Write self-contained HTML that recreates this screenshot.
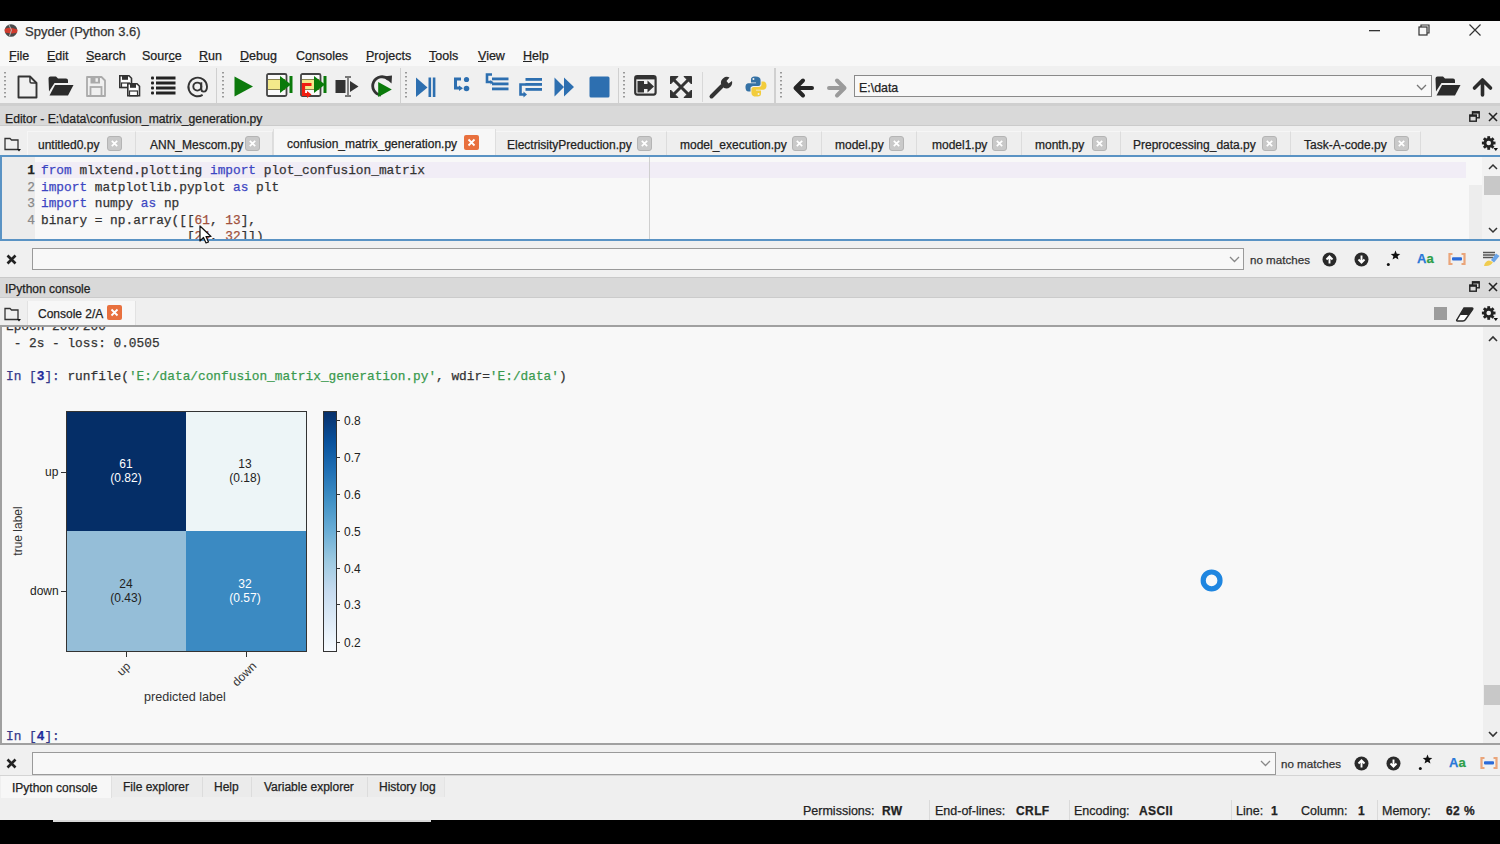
<!DOCTYPE html>
<html><head><meta charset="utf-8">
<style>
*{margin:0;padding:0;box-sizing:border-box}
html,body{width:1500px;height:844px;overflow:hidden;background:#000}
body{position:relative;font-family:"Liberation Sans",sans-serif;font-size:12px;color:#222}
.a{position:absolute}
.t{position:absolute;white-space:pre;line-height:1;-webkit-text-stroke:0.25px currentColor}
.mono{font-family:"Liberation Mono",monospace}
svg{position:absolute;overflow:visible}
</style></head><body>
<!-- window -->
<div class="a" style="left:0;top:21px;width:1500px;height:801px;background:#f0f0f0"></div>
<!-- title bar -->
<div class="a" style="left:0;top:21px;width:1500px;height:45px;background:#f8f8f8"></div>
<svg style="left:4px;top:24px" width="14" height="13" viewBox="0 0 14 13"><circle cx="7" cy="6.5" r="6.3" fill="#4a4a4a"/><path d="M0.6 5 Q5 3 8 4 Q11 4.5 13.4 5.5 L13.2 8.5 Q8 10 4 9 Q2 8.8 0.9 8.5 Z" fill="#d23c2e"/><path d="M5 1 L7.5 6 L5.5 12" stroke="#bbb" stroke-width="1" fill="none"/></svg>
<div class="t" style="left:25px;top:25px;font-size:13px;color:#333">Spyder (Python 3.6)</div>
<svg style="left:1369px;top:30px" width="12" height="2"><rect width="11" height="1.3" fill="#333"/></svg>
<svg style="left:1418px;top:24px" width="13" height="12" viewBox="0 0 13 12"><rect x="1" y="3" width="8" height="8" fill="none" stroke="#333" stroke-width="1.2"/><path d="M3 3 V1 H11 V9 H9" fill="none" stroke="#333" stroke-width="1.2"/></svg>
<svg style="left:1469px;top:24px" width="12" height="12" viewBox="0 0 12 12"><path d="M0.5 0.5 L11.5 11.5 M11.5 0.5 L0.5 11.5" stroke="#333" stroke-width="1.2"/></svg>
<!-- menu -->
<div class="t" style="left:9px;top:50px;font-size:12.5px;color:#222"><u>F</u>ile</div>
<div class="t" style="left:47px;top:50px;font-size:12.5px;color:#222"><u>E</u>dit</div>
<div class="t" style="left:86px;top:50px;font-size:12.5px;color:#222"><u>S</u>earch</div>
<div class="t" style="left:142px;top:50px;font-size:12.5px;color:#222">Sour<u>c</u>e</div>
<div class="t" style="left:199px;top:50px;font-size:12.5px;color:#222"><u>R</u>un</div>
<div class="t" style="left:240px;top:50px;font-size:12.5px;color:#222"><u>D</u>ebug</div>
<div class="t" style="left:296px;top:50px;font-size:12.5px;color:#222">C<u>o</u>nsoles</div>
<div class="t" style="left:366px;top:50px;font-size:12.5px;color:#222"><u>P</u>rojects</div>
<div class="t" style="left:429px;top:50px;font-size:12.5px;color:#222"><u>T</u>ools</div>
<div class="t" style="left:478px;top:50px;font-size:12.5px;color:#222"><u>V</u>iew</div>
<div class="t" style="left:523px;top:50px;font-size:12.5px;color:#222"><u>H</u>elp</div>
<!-- toolbar -->
<div class="a" style="left:0;top:66px;width:1500px;height:40px;background:#f0f0f0;border-bottom:3px solid #cfcfcf"></div>
<!-- grips & separators -->
<svg style="left:4px;top:72px" width="3" height="30"><g fill="#999"><rect y="0" width="2" height="1.5"/><rect y="4" width="2" height="1.5"/><rect y="8" width="2" height="1.5"/><rect y="12" width="2" height="1.5"/><rect y="16" width="2" height="1.5"/><rect y="20" width="2" height="1.5"/><rect y="24" width="2" height="1.5"/></g></svg>
<svg style="left:222px;top:72px" width="3" height="30"><g fill="#999"><rect y="0" width="2" height="1.5"/><rect y="4" width="2" height="1.5"/><rect y="8" width="2" height="1.5"/><rect y="12" width="2" height="1.5"/><rect y="16" width="2" height="1.5"/><rect y="20" width="2" height="1.5"/><rect y="24" width="2" height="1.5"/></g></svg>
<svg style="left:405px;top:72px" width="3" height="30"><g fill="#999"><rect y="0" width="2" height="1.5"/><rect y="4" width="2" height="1.5"/><rect y="8" width="2" height="1.5"/><rect y="12" width="2" height="1.5"/><rect y="16" width="2" height="1.5"/><rect y="20" width="2" height="1.5"/><rect y="24" width="2" height="1.5"/></g></svg>
<svg style="left:623px;top:72px" width="3" height="30"><g fill="#999"><rect y="0" width="2" height="1.5"/><rect y="4" width="2" height="1.5"/><rect y="8" width="2" height="1.5"/><rect y="12" width="2" height="1.5"/><rect y="16" width="2" height="1.5"/><rect y="20" width="2" height="1.5"/><rect y="24" width="2" height="1.5"/></g></svg>
<svg style="left:780px;top:72px" width="3" height="30"><g fill="#999"><rect y="0" width="2" height="1.5"/><rect y="4" width="2" height="1.5"/><rect y="8" width="2" height="1.5"/><rect y="12" width="2" height="1.5"/><rect y="16" width="2" height="1.5"/><rect y="20" width="2" height="1.5"/><rect y="24" width="2" height="1.5"/></g></svg>
<div class="a" style="left:216px;top:68px;width:1px;height:35px;background:#d0d0d0"></div>
<div class="a" style="left:400px;top:68px;width:1px;height:35px;background:#d0d0d0"></div>
<div class="a" style="left:618px;top:68px;width:1px;height:35px;background:#d0d0d0"></div>
<div class="a" style="left:702px;top:72px;width:1px;height:30px;background:#d8d8d8"></div>
<div class="a" style="left:774px;top:68px;width:2px;height:35px;background:#d0d0d0"></div>
<!-- new file -->
<svg style="left:17px;top:75px" width="21" height="24" viewBox="0 0 21 24"><path d="M1.5 1.5 H13 L19.5 8 V22.5 H1.5 Z" fill="#f0f0f0" stroke="#333" stroke-width="1.9" stroke-linejoin="round"/><path d="M13 1.5 V6.5 Q13 8 14.5 8 H19.5" fill="none" stroke="#333" stroke-width="1.5"/></svg>
<!-- open folder -->
<svg style="left:48px;top:76px" width="26" height="20" viewBox="0 0 26 20"><path d="M0.5 2.5 Q0.5 0.5 2.5 0.5 H8 L10 2.5 H18 Q20 2.5 20 4.5 V7 H6.5 L1 15.5 Z" fill="#2b2b2b"/><path d="M7 9 H25.5 L20 19.5 H1.5 Z" fill="#2b2b2b"/></svg>
<!-- save gray -->
<svg style="left:86px;top:76px" width="20" height="21" viewBox="0 0 20 21"><path d="M1 1 H15.5 L19 4.5 V20 H1 Z" fill="#f0f0f0" stroke="#aaa" stroke-width="1.8" stroke-linejoin="round"/><rect x="4.5" y="1" width="9.5" height="6.5" fill="#aaa"/><rect x="9.5" y="2.2" width="2.4" height="3.6" fill="#f0f0f0"/><rect x="4.5" y="11" width="11" height="9" fill="none" stroke="#aaa" stroke-width="1.8"/></svg>
<!-- save all -->
<svg style="left:119px;top:75px" width="22" height="22" viewBox="0 0 22 22"><path d="M0.8 0.8 H10 L12.5 3.3 V12.5 H0.8 Z" fill="#fff" stroke="#333" stroke-width="1.6"/><rect x="3" y="0.8" width="6" height="4" fill="#333"/><rect x="2.5" y="8" width="8" height="4.5" fill="none" stroke="#333" stroke-width="1.2"/><path d="M8.8 8.8 H18 L20.5 11.3 V20.8 H8.8 Z" fill="#fff" stroke="#333" stroke-width="1.6"/><rect x="11" y="8.8" width="6" height="4" fill="#333"/><rect x="10.5" y="16" width="8" height="4.8" fill="none" stroke="#333" stroke-width="1.2"/></svg>
<!-- list -->
<svg style="left:151px;top:76px" width="25" height="20" viewBox="0 0 25 20"><g fill="#222"><rect x="0" y="0.5" width="3" height="3" rx="1"/><rect x="5" y="0.5" width="19.5" height="3"/><rect x="0" y="5.5" width="3" height="3" rx="1"/><rect x="5" y="5.5" width="19.5" height="3"/><rect x="0" y="10.5" width="3" height="3" rx="1"/><rect x="5" y="10.5" width="19.5" height="3"/><rect x="0" y="15.5" width="3" height="3" rx="1"/><rect x="5" y="15.5" width="19.5" height="3"/></g></svg>
<!-- @ -->
<svg style="left:187px;top:76px" width="22" height="21" viewBox="0 0 22 21"><path d="M14.3 6.3 V13 Q14.3 15.6 16.7 15.6 Q20 15.6 20 10.5 A9.3 9.3 0 1 0 15.6 18.9" fill="none" stroke="#333" stroke-width="1.9"/><circle cx="10.3" cy="10.6" r="4" fill="none" stroke="#333" stroke-width="1.9"/></svg>
<!-- run -->
<svg style="left:234px;top:76px" width="20" height="21" viewBox="0 0 20 21"><path d="M0.5 0.5 L19 10.5 L0.5 20.5 Z" fill="#0c7a0c"/></svg>
<!-- run cell -->
<svg style="left:266px;top:73px" width="27" height="24" viewBox="0 0 27 24"><rect x="1" y="1" width="19.5" height="22" rx="1.5" fill="#fafafa" stroke="#444" stroke-width="1.8"/><rect x="2" y="6.5" width="17.5" height="10" fill="#f3e98a"/><path d="M2 6.5 H19.5 M2 16.5 H19.5" stroke="#8a8450" stroke-width="1"/><path d="M14 3 L25 11.5 L14 20 Z" fill="#0a7a0a"/><rect x="23.5" y="3" width="3" height="17" fill="#0a7a0a"/></svg>
<!-- run cell advance -->
<svg style="left:300px;top:73px" width="27" height="25" viewBox="0 0 27 25"><rect x="1" y="1" width="19.5" height="22" rx="1.5" fill="#fafafa" stroke="#444" stroke-width="1.8"/><rect x="2" y="6.5" width="17.5" height="10" fill="#f3e98a"/><path d="M2 6.5 H19.5 M2 16.5 H19.5" stroke="#8a8450" stroke-width="1"/><path d="M14 3 L25 11.5 L14 20 Z" fill="#0a7a0a"/><rect x="23.5" y="3" width="3" height="17" fill="#0a7a0a"/><path d="M11.5 11.5 H3.5 V21.5 H8" fill="none" stroke="#f01e10" stroke-width="3.2"/><path d="M7 18 L11.5 21.5 L7 25 Z" fill="#f01e10"/></svg>
<!-- run selection -->
<svg style="left:335px;top:76px" width="25" height="21" viewBox="0 0 25 21"><rect x="0.5" y="4" width="10" height="13" fill="#333"/><path d="M10 1 H16 M13 1 V20 M10 20 H16" stroke="#777" stroke-width="1.8"/><path d="M15 5 L23.5 10.5 L15 16 Z" fill="#333"/></svg>
<!-- re-run -->
<svg style="left:370px;top:75px" width="24" height="23" viewBox="0 0 24 23"><path d="M18.5 4.5 A9.2 9.2 0 1 0 10.9 20.1" fill="none" stroke="#333" stroke-width="2.8"/><path d="M13.5 1.5 L22 0.5 L21.5 8.5 Z" fill="#333"/><path d="M8.2 7 L21.8 14.5 L8.2 22 Z" fill="#0a7a0a"/></svg>
<!-- debug -->
<svg style="left:416px;top:77px" width="20" height="21" viewBox="0 0 20 21"><path d="M0 0.5 L11.5 10.5 L0 20 Z" fill="#2d6fb0"/><rect x="12.5" y="0.5" width="2.6" height="19.5" fill="#2d6fb0"/><rect x="16.8" y="0.5" width="2.6" height="19.5" fill="#2d6fb0"/></svg>
<!-- step -->
<svg style="left:453px;top:76px" width="20" height="18" viewBox="0 0 20 18"><path d="M8 3 H2.5 V12 H7" fill="none" stroke="#2d6fb0" stroke-width="3"/><path d="M6 9.5 L10 12.3 L6 15 Z" fill="#2d6fb0"/><circle cx="13.5" cy="3.5" r="2.6" fill="#2d6fb0"/><circle cx="13.5" cy="12.5" r="2.8" fill="#2d6fb0"/></svg>
<!-- step into -->
<svg style="left:485px;top:73px" width="24" height="19" viewBox="0 0 24 19"><path d="M7 1.5 H2 V9 H6" fill="none" stroke="#2d6fb0" stroke-width="2.6"/><path d="M5.5 7 L8.5 9.2 L5.5 11.5 Z" fill="#2d6fb0"/><rect x="7" y="4.5" width="16.5" height="2.8" fill="#2d6fb0"/><rect x="7" y="9.5" width="16.5" height="2.8" fill="#2d6fb0"/><rect x="7" y="14.5" width="16.5" height="2.8" fill="#2d6fb0"/></svg>
<!-- step return -->
<svg style="left:518px;top:77px" width="25" height="21" viewBox="0 0 25 21"><rect x="7.5" y="1" width="16.5" height="2.8" fill="#2d6fb0"/><rect x="7.5" y="6" width="16.5" height="2.8" fill="#2d6fb0"/><rect x="7.5" y="11" width="16.5" height="2.8" fill="#2d6fb0"/><path d="M8 7.5 H2.5 V17.5 H6" fill="none" stroke="#2d6fb0" stroke-width="2.6"/><path d="M5.5 14.5 L9 17.5 L5.5 20.5 Z" fill="#2d6fb0"/></svg>
<!-- continue -->
<svg style="left:554px;top:77px" width="21" height="20" viewBox="0 0 21 20"><path d="M0.5 0.5 L10 10 L0.5 19.5 Z M10 0.5 L20 10 L10 19.5 Z" fill="#2d6fb0"/></svg>
<!-- stop -->
<svg style="left:589px;top:76px" width="21" height="22" viewBox="0 0 21 22"><rect x="0.5" y="0.5" width="20" height="21" rx="1.5" fill="#2d6fb0"/></svg>
<!-- maximize pane -->
<svg style="left:634px;top:75px" width="23" height="21" viewBox="0 0 23 21"><rect x="1.2" y="1.2" width="20.4" height="18.4" rx="2" fill="#f0f0f0" stroke="#333" stroke-width="2.2"/><rect x="1.2" y="1.2" width="20.4" height="3.2" fill="#333"/><rect x="3.5" y="6" width="6.5" height="11.5" fill="#333"/><path d="M9 9 H13.5 V5.5 L20 11.5 L13.5 17.5 V14 H9 Z" fill="#333"/></svg>
<!-- fullscreen -->
<svg style="left:670px;top:76px" width="22" height="22" viewBox="0 0 22 22"><path d="M4 4 L18 18 M18 4 L4 18" stroke="#333" stroke-width="3"/><path d="M0.5 0.5 H8 L0.5 8 Z M21.5 0.5 H14 L21.5 8 Z M0.5 21.5 H8 L0.5 14 Z M21.5 21.5 H14 L21.5 14 Z" fill="#333" stroke="#333" stroke-width="1" stroke-linejoin="round"/></svg>
<!-- wrench -->
<svg style="left:709px;top:76px" width="25" height="23" viewBox="0 0 25 23"><path d="M2.5 20.5 L13 10" stroke="#333" stroke-width="4" stroke-linecap="round"/><path d="M12 8 A6 6 0 0 1 20.5 1.5 L17.5 5 L19.5 7.5 L23 5 A6 6 0 0 1 15 12 Z" fill="#333"/></svg>
<!-- python -->
<svg style="left:745px;top:76px" width="22" height="21" viewBox="0 0 24 23"><path d="M11.5 0.5 C6.5 0.5 6.5 2.5 6.5 4.5 V7 H12 V8 H4 C1 8 0.5 10.5 0.5 12.5 C0.5 15 1.5 17 4 17 H6 V13.5 C6 12 7.5 11 9 11 H14.5 C16 11 17 10 17 8.5 V4.5 C17 2 15 0.5 11.5 0.5 Z" fill="#3572a5"/><circle cx="9.2" cy="3.3" r="1.1" fill="#f0f0f0"/><path d="M12.5 22.5 C17.5 22.5 17.5 20.5 17.5 18.5 V16 H12 V15 H20 C23 15 23.5 12.5 23.5 10.5 C23.5 8 22.5 6 20 6 H18 V9.5 C18 11 16.5 12 15 12 H9.5 C8 12 7 13 7 14.5 V18.5 C7 21 9 22.5 12.5 22.5 Z" fill="#f2cc3c"/><circle cx="14.8" cy="19.7" r="1.1" fill="#f0f0f0"/></svg>
<!-- back -->
<svg style="left:793px;top:78px" width="21" height="20" viewBox="0 0 21 20"><path d="M19 10 H4 M10 2.5 L2.5 10 L10 17.5" fill="none" stroke="#262626" stroke-width="4" stroke-linecap="round" stroke-linejoin="round"/></svg>
<!-- forward -->
<svg style="left:826px;top:78px" width="21" height="20" viewBox="0 0 21 20"><path d="M3 10 H17 M11 2.5 L18.5 10 L11 17.5" fill="none" stroke="#9a9a9a" stroke-width="4" stroke-linecap="round" stroke-linejoin="round"/></svg>
<!-- address box -->
<div class="a" style="left:854px;top:75px;width:578px;height:22px;background:#f8f8f8;border:1.5px solid #8a8a8a"></div>
<div class="t" style="left:859px;top:82px;font-size:12.4px;color:#222">E:\data</div>
<svg style="left:1416px;top:84px" width="11" height="7" viewBox="0 0 11 7"><path d="M1 1 L5.5 5.5 L10 1" fill="none" stroke="#777" stroke-width="1.3"/></svg>
<!-- folder -->
<svg style="left:1435px;top:76px" width="26" height="20" viewBox="0 0 26 20"><path d="M0.5 2.5 Q0.5 0.5 2.5 0.5 H8 L10 2.5 H18 Q20 2.5 20 4.5 V7 H6.5 L1 15.5 Z" fill="#2b2b2b"/><path d="M7 9 H25.5 L20 19.5 H1.5 Z" fill="#2b2b2b"/></svg>
<!-- up -->
<svg style="left:1472px;top:77px" width="21" height="20" viewBox="0 0 21 20"><path d="M10.5 18 V3 M2.5 11 L10.5 3 L18.5 11" fill="none" stroke="#2b2b2b" stroke-width="3.6" stroke-linecap="round" stroke-linejoin="round"/></svg>

<!-- editor dock header -->
<div class="a" style="left:0;top:106px;width:1500px;height:20px;background:#d9d9d9;border-bottom:1px solid #cbcbcb"></div>
<div class="t" style="left:5px;top:112.5px;font-size:12.2px;color:#222">Editor - E:\data\confusion_matrix_generation.py</div>

<!-- editor tab bar -->
<div class="a" style="left:0;top:126px;width:1500px;height:30px;background:#efefef"></div>
<svg style="left:4px;top:137px" width="17" height="15" viewBox="0 0 17 15"><path d="M1 1.5 H6 L7.5 3 H14 V12.5 H1 Z" fill="none" stroke="#333" stroke-width="1.3"/><path d="M13 12 H17 L15 14.5 Z" fill="#111"/></svg>
<div class="a" style="left:27px;top:131px;width:109px;height:24px;background:#eeeeee;border-left:1px solid #f6f6f6;border-top:1px solid #f6f6f6;border-right:1px solid #dcdcdc"></div>
<div class="a" style="left:136px;top:131px;width:137px;height:24px;background:#eeeeee;border-top:1px solid #f6f6f6;border-right:1px solid #dcdcdc"></div>
<div class="a" style="left:273px;top:129px;width:223px;height:27px;background:#f7f7f7;border-left:1px solid #dedede;border-right:1px solid #dedede"></div>
<div class="a" style="left:496px;top:131px;width:171px;height:24px;background:#eeeeee;border-top:1px solid #f6f6f6;border-right:1px solid #dcdcdc"></div>
<div class="a" style="left:667px;top:131px;width:155px;height:24px;background:#eeeeee;border-top:1px solid #f6f6f6;border-right:1px solid #dcdcdc"></div>
<div class="a" style="left:822px;top:131px;width:95px;height:24px;background:#eeeeee;border-top:1px solid #f6f6f6;border-right:1px solid #dcdcdc"></div>
<div class="a" style="left:917px;top:131px;width:105px;height:24px;background:#eeeeee;border-top:1px solid #f6f6f6;border-right:1px solid #dcdcdc"></div>
<div class="a" style="left:1022px;top:131px;width:99px;height:24px;background:#eeeeee;border-top:1px solid #f6f6f6;border-right:1px solid #dcdcdc"></div>
<div class="a" style="left:1121px;top:131px;width:170px;height:24px;background:#eeeeee;border-top:1px solid #f6f6f6;border-right:1px solid #dcdcdc"></div>
<div class="a" style="left:1291px;top:131px;width:130px;height:24px;background:#eeeeee;border-top:1px solid #f6f6f6;border-right:1px solid #dcdcdc"></div>
<div class="t" style="left:38px;top:138.5px;color:#222">untitled0.py</div>
<div class="t" style="left:150px;top:138.5px;color:#222">ANN_Mescom.py</div>
<div class="t" style="left:287px;top:137.5px;color:#222">confusion_matrix_generation.py</div>
<div class="t" style="left:507px;top:138.5px;color:#222">ElectrisityPreduction.py</div>
<div class="t" style="left:680px;top:138.5px;color:#222">model_execution.py</div>
<div class="t" style="left:835px;top:138.5px;color:#222">model.py</div>
<div class="t" style="left:932px;top:138.5px;color:#222">model1.py</div>
<div class="t" style="left:1035px;top:138.5px;color:#222">month.py</div>
<div class="t" style="left:1133px;top:138.5px;color:#222">Preprocessing_data.py</div>
<div class="t" style="left:1304px;top:138.5px;color:#222">Task-A-code.py</div>
<svg style="left:107px;top:136px" width="15" height="15" viewBox="0 0 15 15"><rect x="0.5" y="0.5" width="14" height="14" rx="2.5" fill="#c9c9c9" stroke="#b4b4b4" stroke-width="1"/><path d="M4.8 4.8 L10.2 10.2 M10.2 4.8 L4.8 10.2" stroke="#fff" stroke-width="1.7"/></svg>
<svg style="left:245px;top:136px" width="15" height="15" viewBox="0 0 15 15"><rect x="0.5" y="0.5" width="14" height="14" rx="2.5" fill="#c9c9c9" stroke="#b4b4b4" stroke-width="1"/><path d="M4.8 4.8 L10.2 10.2 M10.2 4.8 L4.8 10.2" stroke="#fff" stroke-width="1.7"/></svg>
<svg style="left:464px;top:135px" width="15" height="15" viewBox="0 0 15 15"><rect width="15" height="15" rx="2" fill="#e8703e"/><path d="M4.5 4.5 L10.5 10.5 M10.5 4.5 L4.5 10.5" stroke="#fff" stroke-width="1.8"/></svg>
<svg style="left:637px;top:136px" width="15" height="15" viewBox="0 0 15 15"><rect x="0.5" y="0.5" width="14" height="14" rx="2.5" fill="#c9c9c9" stroke="#b4b4b4" stroke-width="1"/><path d="M4.8 4.8 L10.2 10.2 M10.2 4.8 L4.8 10.2" stroke="#fff" stroke-width="1.7"/></svg>
<svg style="left:792px;top:136px" width="15" height="15" viewBox="0 0 15 15"><rect x="0.5" y="0.5" width="14" height="14" rx="2.5" fill="#c9c9c9" stroke="#b4b4b4" stroke-width="1"/><path d="M4.8 4.8 L10.2 10.2 M10.2 4.8 L4.8 10.2" stroke="#fff" stroke-width="1.7"/></svg>
<svg style="left:889px;top:136px" width="15" height="15" viewBox="0 0 15 15"><rect x="0.5" y="0.5" width="14" height="14" rx="2.5" fill="#c9c9c9" stroke="#b4b4b4" stroke-width="1"/><path d="M4.8 4.8 L10.2 10.2 M10.2 4.8 L4.8 10.2" stroke="#fff" stroke-width="1.7"/></svg>
<svg style="left:992px;top:136px" width="15" height="15" viewBox="0 0 15 15"><rect x="0.5" y="0.5" width="14" height="14" rx="2.5" fill="#c9c9c9" stroke="#b4b4b4" stroke-width="1"/><path d="M4.8 4.8 L10.2 10.2 M10.2 4.8 L4.8 10.2" stroke="#fff" stroke-width="1.7"/></svg>
<svg style="left:1092px;top:136px" width="15" height="15" viewBox="0 0 15 15"><rect x="0.5" y="0.5" width="14" height="14" rx="2.5" fill="#c9c9c9" stroke="#b4b4b4" stroke-width="1"/><path d="M4.8 4.8 L10.2 10.2 M10.2 4.8 L4.8 10.2" stroke="#fff" stroke-width="1.7"/></svg>
<svg style="left:1262px;top:136px" width="15" height="15" viewBox="0 0 15 15"><rect x="0.5" y="0.5" width="14" height="14" rx="2.5" fill="#c9c9c9" stroke="#b4b4b4" stroke-width="1"/><path d="M4.8 4.8 L10.2 10.2 M10.2 4.8 L4.8 10.2" stroke="#fff" stroke-width="1.7"/></svg>
<svg style="left:1394px;top:136px" width="15" height="15" viewBox="0 0 15 15"><rect x="0.5" y="0.5" width="14" height="14" rx="2.5" fill="#c9c9c9" stroke="#b4b4b4" stroke-width="1"/><path d="M4.8 4.8 L10.2 10.2 M10.2 4.8 L4.8 10.2" stroke="#fff" stroke-width="1.7"/></svg>
<!-- gear -->
<svg style="left:1482px;top:136px" width="17" height="17" viewBox="0 0 17 17"><g transform="translate(6.7 7)" fill="#222"><rect x="-1.4" y="-6.8" width="2.8" height="13.6"/><rect x="-1.4" y="-6.8" width="2.8" height="13.6" transform="rotate(45)"/><rect x="-1.4" y="-6.8" width="2.8" height="13.6" transform="rotate(90)"/><rect x="-1.4" y="-6.8" width="2.8" height="13.6" transform="rotate(135)"/><circle r="5.1"/><circle r="2.3" fill="#efefef"/></g><path d="M11.5 12 L16 12 L13.8 15 Z" fill="#111"/></svg>

<!-- editor -->
<div class="a" style="left:0;top:155px;width:1500px;height:86px;background:#5a93c4"></div>
<div class="a" style="left:2px;top:157px;width:1498px;height:82px;background:#f8f8f8;overflow:hidden">
  <div class="a" style="left:0;top:0;width:33px;height:82px;background:#ececec"></div>
  <div class="a" style="left:33px;top:5px;width:1431px;height:16px;background:#f1edf6"></div>
  <div class="a" style="left:647px;top:0;width:1px;height:82px;background:#cfcfcf"></div>
  <div class="a" style="left:1467px;top:28px;width:13px;height:54px;background:#ededed"></div>
  <div class="a" style="left:1480px;top:0;width:18px;height:82px;background:#f2f2f2"></div>
  <div class="a" style="left:1482px;top:19px;width:16px;height:19px;background:#c8c8c8"></div>
  <svg style="left:1486px;top:7px" width="10" height="6" viewBox="0 0 10 6"><path d="M1 5 L5 1 L9 5" fill="none" stroke="#333" stroke-width="1.5"/></svg>
  <svg style="left:1486px;top:70px" width="10" height="6" viewBox="0 0 10 6"><path d="M1 1 L5 5 L9 1" fill="none" stroke="#333" stroke-width="1.5"/></svg>
  <div class="mono t" style="left:0;top:6px;font-size:12.8px;line-height:16.5px;width:33px;text-align:right;color:#888"><b style="color:#222">1</b>
2
3
4</div>
  <div class="mono t" style="left:39px;top:6px;font-size:12.8px;line-height:16.5px;color:#333"><span style="color:#3c46c2">from</span> mlxtend.plotting <span style="color:#3c46c2">import</span> plot_confusion_matrix
<span style="color:#3c46c2">import</span> matplotlib.pyplot <span style="color:#3c46c2">as</span> plt
<span style="color:#3c46c2">import</span> numpy <span style="color:#3c46c2">as</span> np
binary = np.array([[<span style="color:#a0503c">61</span>, <span style="color:#a0503c">13</span>],
                   [<span style="color:#a0503c">24</span>, <span style="color:#a0503c">32</span>]])</div>
</div>


<!-- find bar 1 -->
<div class="a" style="left:0;top:241px;width:1500px;height:36px;background:#f0f0f0"></div>
<svg style="left:6px;top:254px" width="11" height="11" viewBox="0 0 11 11"><path d="M1.5 1.5 L9.5 9.5 M9.5 1.5 L1.5 9.5" stroke="#222" stroke-width="2.6"/></svg>
<div class="a" style="left:32px;top:248px;width:1212px;height:22px;background:#f8f8f8;border:1.5px solid #9a9a9a"></div>
<svg style="left:1229px;top:256px" width="11" height="7" viewBox="0 0 11 7"><path d="M1 1 L5.5 5.5 L10 1" fill="none" stroke="#888" stroke-width="1.3"/></svg>
<div class="t" style="left:1250px;top:254px;font-size:11.6px;color:#333">no matches</div>
<svg style="left:1322px;top:252px" width="15" height="15" viewBox="0 0 15 15"><circle cx="7.5" cy="7.5" r="7" fill="#2a2a2a"/><path d="M7.5 11.5 V4.5 M4.5 7.5 L7.5 4.3 L10.5 7.5" fill="none" stroke="#fff" stroke-width="1.9"/></svg>
<svg style="left:1354px;top:252px" width="15" height="15" viewBox="0 0 15 15"><circle cx="7.5" cy="7.5" r="7" fill="#2a2a2a"/><path d="M7.5 3.5 V10.5 M4.5 7.5 L7.5 10.7 L10.5 7.5" fill="none" stroke="#fff" stroke-width="1.9"/></svg>
<svg style="left:1386px;top:251px" width="16" height="16" viewBox="0 0 16 16"><circle cx="2.3" cy="13.5" r="1.5" fill="#111"/><path d="M9.50 -0.50 L10.79 2.72 L14.26 2.95 L11.59 5.18 L12.44 8.55 L9.50 6.70 L6.56 8.55 L7.41 5.18 L4.74 2.95 L8.21 2.72 Z" fill="#111"/></svg>
<div class="t" style="left:1417px;top:252px;font-size:13px;font-weight:bold;color:#2a78d8">A<span style="color:#2e9e4a">a</span></div>
<svg style="left:1448px;top:253px" width="18" height="12" viewBox="0 0 18 13" preserveAspectRatio="none"><path d="M4.5 1 H1.5 V12 H4.5 M13.5 1 H16.5 V12 H13.5" fill="none" stroke="#eaa57a" stroke-width="2.2"/><rect x="4" y="4.5" width="10" height="3.5" rx="1" fill="#2a6ad8"/></svg>
<svg style="left:1482px;top:251px" width="18" height="16" viewBox="0 0 18 16"><path d="M1 1.5 H13 M1 4 H13 M1 6.5 H11" stroke="#555" stroke-width="1.5"/><path d="M9 9 L14 2.5 L17.5 5 L12 11.5 Z" fill="#6aa4e8"/><path d="M2 15 Q3 10 7 9.5 L11 11 Q9 15 4 15 Z" fill="#f0cc50"/></svg>

<!-- console header -->
<div class="a" style="left:0;top:277px;width:1500px;height:21px;background:#d9d9d9;border-top:1px solid #c9c9c9;border-bottom:1px solid #cbcbcb"></div>
<div class="t" style="left:5px;top:283px;font-size:12px;color:#222">IPython console</div>
<svg style="left:1469px;top:111px" width="11" height="11" viewBox="0 0 11 11"><rect x="3.5" y="0.8" width="6.7" height="6" fill="none" stroke="#222" stroke-width="1.4"/><rect x="3.5" y="0.8" width="6.7" height="1.8" fill="#222"/><rect x="0.8" y="4" width="6.5" height="6.2" fill="#d9d9d9" stroke="#222" stroke-width="1.4"/><rect x="0.8" y="4" width="6.5" height="1.8" fill="#222"/></svg>
<svg style="left:1488px;top:112px" width="10" height="10" viewBox="0 0 10 10"><path d="M1 1 L9 9 M9 1 L1 9" stroke="#222" stroke-width="1.6"/></svg>
<svg style="left:1469px;top:281px" width="11" height="11" viewBox="0 0 11 11"><rect x="3.5" y="0.8" width="6.7" height="6" fill="none" stroke="#222" stroke-width="1.4"/><rect x="3.5" y="0.8" width="6.7" height="1.8" fill="#222"/><rect x="0.8" y="4" width="6.5" height="6.2" fill="#d9d9d9" stroke="#222" stroke-width="1.4"/><rect x="0.8" y="4" width="6.5" height="1.8" fill="#222"/></svg>
<svg style="left:1488px;top:282px" width="10" height="10" viewBox="0 0 10 10"><path d="M1 1 L9 9 M9 1 L1 9" stroke="#222" stroke-width="1.6"/></svg>

<!-- console tab bar -->
<div class="a" style="left:0;top:298px;width:1500px;height:28px;background:#efefef"></div>
<svg style="left:4px;top:307px" width="17" height="15" viewBox="0 0 17 15"><path d="M1 1.5 H6 L7.5 3 H14 V12.5 H1 Z" fill="none" stroke="#333" stroke-width="1.3"/><path d="M13 12 H17 L15 14.5 Z" fill="#111"/></svg>
<div class="a" style="left:27px;top:301px;width:109px;height:26px;background:#f7f7f7;border-left:1px solid #e2e2e2;border-right:1px solid #e2e2e2"></div>
<div class="t" style="left:38px;top:308px;color:#222">Console 2/A</div>
<svg style="left:107px;top:305px" width="15" height="15" viewBox="0 0 15 15"><rect width="15" height="15" rx="2" fill="#e8703e"/><path d="M4.5 4.5 L10.5 10.5 M10.5 4.5 L4.5 10.5" stroke="#fff" stroke-width="1.8"/></svg>
<div class="a" style="left:1434px;top:307px;width:13px;height:13px;background:#9c9c9c"></div>
<svg style="left:1455px;top:307px" width="19" height="15" viewBox="0 0 19 15"><path d="M9 1 H17 Q18.5 1 17.5 2.5 L10.5 12.5 Q9.5 14 8 14 H2.5 Q1 14 2 12.5 Z" fill="#fff" stroke="#2a2a2a" stroke-width="1.4"/><path d="M9 1 H17 Q18.5 1 17.5 2.5 L13.5 8 H5 Z" fill="#2a2a2a"/></svg>
<svg style="left:1482px;top:306px" width="17" height="17" viewBox="0 0 17 17"><g transform="translate(6.7 7)" fill="#222"><rect x="-1.4" y="-6.8" width="2.8" height="13.6"/><rect x="-1.4" y="-6.8" width="2.8" height="13.6" transform="rotate(45)"/><rect x="-1.4" y="-6.8" width="2.8" height="13.6" transform="rotate(90)"/><rect x="-1.4" y="-6.8" width="2.8" height="13.6" transform="rotate(135)"/><circle r="5.1"/><circle r="2.3" fill="#efefef"/></g><path d="M11.5 12 L16 12 L13.8 15 Z" fill="#111"/></svg>

<!-- console -->
<div class="a" style="left:0;top:325px;width:1500px;height:420px;background:#f8f8f8;border-left:2px solid #a0a0a0;border-top:2px solid #a0a0a0;border-bottom:2px solid #a0a0a0;overflow:hidden">
  <div class="a" style="left:1481px;top:0;width:19px;height:420px;background:#efefef"></div>
  <div class="a" style="left:1482px;top:358px;width:18px;height:20px;background:#c8c8c8"></div>
  <svg style="left:1486px;top:9px" width="10" height="6" viewBox="0 0 10 6"><path d="M1 5 L5 1 L9 5" fill="none" stroke="#333" stroke-width="1.6"/></svg>
  <svg style="left:1486px;top:404px" width="10" height="6" viewBox="0 0 10 6"><path d="M1 1 L5 5 L9 1" fill="none" stroke="#333" stroke-width="1.6"/></svg>
  <div class="mono t" style="left:4px;top:-8px;font-size:12.8px;line-height:16.5px;color:#333">Epoch 200/200
 - 2s - loss: 0.0505

<span style="color:#35398a">In [<b style="color:#1f2c9c">3</b>]:</span> runfile(<span style="color:#3a9a4e">'E:/data/confusion_matrix_generation.py'</span>, wdir=<span style="color:#3a9a4e">'E:/data'</span>)</div>
  <div class="mono t" style="left:4px;top:402px;font-size:12.8px;line-height:16.5px;color:#333"><span style="color:#35398a">In [<b style="color:#1f2c9c">4</b>]:</span></div>
</div>
<!-- plot -->
<div class="a" style="left:66px;top:411px;width:241px;height:241px;border:1px solid #333;background:#08306b">
  <div class="a" style="left:0;top:0;width:119px;height:119px;background:#052e67"></div>
  <div class="a" style="left:119px;top:0;width:120px;height:119px;background:#edf5f7"></div>
  <div class="a" style="left:0;top:119px;width:119px;height:120px;background:#95bed8"></div>
  <div class="a" style="left:119px;top:119px;width:120px;height:120px;background:#3b8ac2"></div>
</div>
<div class="t" style="-webkit-text-stroke:0;left:96px;top:458px;width:60px;text-align:center;font-size:12px;line-height:13.5px;color:#fff">61
(0.82)</div>
<div class="t" style="-webkit-text-stroke:0;left:215px;top:458px;width:60px;text-align:center;font-size:12px;line-height:13.5px;color:#222">13
(0.18)</div>
<div class="t" style="-webkit-text-stroke:0;left:96px;top:578px;width:60px;text-align:center;font-size:12px;line-height:13.5px;color:#222">24
(0.43)</div>
<div class="t" style="-webkit-text-stroke:0;left:215px;top:578px;width:60px;text-align:center;font-size:12px;line-height:13.5px;color:#fff">32
(0.57)</div>
<div class="a" style="left:61px;top:472px;width:5px;height:1px;background:#333"></div>
<div class="a" style="left:61px;top:591px;width:5px;height:1px;background:#333"></div>
<div class="a" style="left:126px;top:652px;width:1px;height:5px;background:#333"></div>
<div class="a" style="left:246px;top:652px;width:1px;height:5px;background:#333"></div>
<div class="t" style="-webkit-text-stroke:0;left:45px;top:466px;font-size:12px;color:#222">up</div>
<div class="t" style="-webkit-text-stroke:0;left:30px;top:585px;font-size:12px;color:#222">down</div>
<div class="t" style="-webkit-text-stroke:0;left:-8px;top:525px;width:52px;text-align:center;font-size:12px;color:#333;transform:rotate(-90deg)">true label</div>
<div class="t" style="-webkit-text-stroke:0;left:117px;top:663px;font-size:12px;color:#333;transform:rotate(-45deg)">up</div>
<div class="t" style="-webkit-text-stroke:0;left:230px;top:668px;font-size:12px;color:#333;transform:rotate(-45deg)">down</div>
<div class="t" style="-webkit-text-stroke:0;left:144px;top:691px;font-size:12.6px;color:#333">predicted label</div>
<!-- colorbar -->
<div class="a" style="left:323px;top:411px;width:14px;height:241px;border:1px solid #333;background:linear-gradient(to bottom,#08306b 0%,#08519c 12.5%,#2171b5 25%,#4292c6 37.5%,#6baed6 50%,#9ecae1 62.5%,#c6dbef 75%,#deebf7 87.5%,#f7fbff 100%)"></div>
<svg style="left:336px;top:410px" width="5" height="240"><g stroke="#333" stroke-width="1"><path d="M0 10.5 H4 M0 47.5 H4 M0 84.5 H4 M0 121.5 H4 M0 158.5 H4 M0 194.5 H4 M0 232.5 H4"/></g></svg>
<div class="t" style="-webkit-text-stroke:0;left:344px;top:415px;font-size:12px;line-height:1;color:#222">0.8</div>
<div class="t" style="-webkit-text-stroke:0;left:344px;top:452px;font-size:12px;line-height:1;color:#222">0.7</div>
<div class="t" style="-webkit-text-stroke:0;left:344px;top:489px;font-size:12px;line-height:1;color:#222">0.6</div>
<div class="t" style="-webkit-text-stroke:0;left:344px;top:526px;font-size:12px;line-height:1;color:#222">0.5</div>
<div class="t" style="-webkit-text-stroke:0;left:344px;top:563px;font-size:12px;line-height:1;color:#222">0.4</div>
<div class="t" style="-webkit-text-stroke:0;left:344px;top:599px;font-size:12px;line-height:1;color:#222">0.3</div>
<div class="t" style="-webkit-text-stroke:0;left:344px;top:637px;font-size:12px;line-height:1;color:#222">0.2</div>
<!-- spinner -->
<svg style="left:1200px;top:568px" width="24" height="24" viewBox="0 0 24 24"><circle cx="11.6" cy="12.4" r="8.4" fill="none" stroke="#1f86e0" stroke-width="5.2"/></svg>

<!-- find bar 2 -->
<div class="a" style="left:0;top:746px;width:1500px;height:30px;background:#f0f0f0"></div>

<!-- bottom tabs -->
<svg style="left:6px;top:758px" width="11" height="11" viewBox="0 0 11 11"><path d="M1.5 1.5 L9.5 9.5 M9.5 1.5 L1.5 9.5" stroke="#222" stroke-width="2.6"/></svg>
<div class="a" style="left:32px;top:752px;width:1244px;height:23px;background:#f8f8f8;border:1.5px solid #9a9a9a"></div>
<svg style="left:1260px;top:760px" width="11" height="7" viewBox="0 0 11 7"><path d="M1 1 L5.5 5.5 L10 1" fill="none" stroke="#888" stroke-width="1.3"/></svg>
<div class="t" style="left:1281px;top:758px;font-size:11.6px;color:#333">no matches</div>
<svg style="left:1354px;top:756px" width="15" height="15" viewBox="0 0 15 15"><circle cx="7.5" cy="7.5" r="7" fill="#2a2a2a"/><path d="M7.5 11.5 V4.5 M4.5 7.5 L7.5 4.3 L10.5 7.5" fill="none" stroke="#fff" stroke-width="1.9"/></svg>
<svg style="left:1386px;top:756px" width="15" height="15" viewBox="0 0 15 15"><circle cx="7.5" cy="7.5" r="7" fill="#2a2a2a"/><path d="M7.5 3.5 V10.5 M4.5 7.5 L7.5 10.7 L10.5 7.5" fill="none" stroke="#fff" stroke-width="1.9"/></svg>
<svg style="left:1418px;top:755px" width="16" height="16" viewBox="0 0 16 16"><circle cx="2.3" cy="13.5" r="1.5" fill="#111"/><path d="M9.50 -0.50 L10.79 2.72 L14.26 2.95 L11.59 5.18 L12.44 8.55 L9.50 6.70 L6.56 8.55 L7.41 5.18 L4.74 2.95 L8.21 2.72 Z" fill="#111"/></svg>
<div class="t" style="left:1449px;top:756px;font-size:13px;font-weight:bold;color:#2a78d8">A<span style="color:#2e9e4a">a</span></div>
<svg style="left:1480px;top:757px" width="18" height="12" viewBox="0 0 18 13" preserveAspectRatio="none"><path d="M4.5 1 H1.5 V12 H4.5 M13.5 1 H16.5 V12 H13.5" fill="none" stroke="#eaa57a" stroke-width="2.2"/><rect x="4" y="4.5" width="10" height="3.5" rx="1" fill="#2a6ad8"/></svg>
<div class="a" style="left:0;top:775px;width:1500px;height:46px;background:#efefef;border-top:1px solid #d4d4d4"></div>
<div class="a" style="left:1px;top:776px;width:111px;height:22px;background:#f7f7f7;border-right:1px solid #e0e0e0"></div>
<div class="a" style="left:112px;top:777px;width:91px;height:20px;background:#ebebeb;border-right:1px solid #dcdcdc"></div>
<div class="a" style="left:203px;top:777px;width:49px;height:20px;background:#ebebeb;border-right:1px solid #dcdcdc"></div>
<div class="a" style="left:252px;top:777px;width:116px;height:20px;background:#ebebeb;border-right:1px solid #dcdcdc"></div>
<div class="a" style="left:368px;top:777px;width:77px;height:20px;background:#ebebeb;border-right:1px solid #e4e4e4"></div>
<div class="t" style="left:12px;top:782px;color:#222">IPython console</div>
<div class="t" style="left:123px;top:781px;color:#222">File explorer</div>
<div class="t" style="left:214px;top:781px;color:#222">Help</div>
<div class="t" style="left:264px;top:781px;color:#222">Variable explorer</div>
<div class="t" style="left:379px;top:781px;color:#222">History log</div>
<!-- status bar -->
<div class="t" style="left:803px;top:805px;font-size:12.5px;color:#222">Permissions:</div>
<div class="t" style="left:882px;top:805px;color:#222;font-weight:bold;letter-spacing:0.4px">RW</div>
<div class="a" style="left:929px;top:800px;width:1px;height:20px;background:#dadada"></div>
<div class="t" style="left:935px;top:805px;font-size:12.5px;color:#222">End-of-lines:</div>
<div class="t" style="left:1016px;top:805px;color:#222;font-weight:bold;letter-spacing:0.4px">CRLF</div>
<div class="a" style="left:1069px;top:800px;width:1px;height:20px;background:#dadada"></div>
<div class="t" style="left:1074px;top:805px;font-size:12.5px;color:#222">Encoding:</div>
<div class="t" style="left:1139px;top:805px;color:#222;font-weight:bold;letter-spacing:0.4px">ASCII</div>
<div class="a" style="left:1231px;top:800px;width:1px;height:20px;background:#dadada"></div>
<div class="t" style="left:1236px;top:805px;font-size:12.5px;color:#222">Line:</div>
<div class="t" style="left:1271px;top:805px;color:#222;font-weight:bold;letter-spacing:0.4px">1</div>
<div class="t" style="left:1301px;top:805px;font-size:12.5px;color:#222">Column:</div>
<div class="t" style="left:1358px;top:805px;color:#222;font-weight:bold;letter-spacing:0.4px">1</div>
<div class="a" style="left:1377px;top:800px;width:1px;height:20px;background:#dadada"></div>
<div class="t" style="left:1382px;top:805px;font-size:12.5px;color:#222">Memory:</div>
<div class="t" style="left:1446px;top:805px;color:#222;font-weight:bold;letter-spacing:0.4px">62 %</div>

<!-- black bottom -->
<div class="a" style="left:0;top:820px;width:1500px;height:24px;background:#000"></div>
<div class="a" style="left:53px;top:820px;width:378px;height:2px;background:#d8d8d8"></div>
<!-- mouse cursor -->
<svg style="left:199px;top:225px" width="14" height="20" viewBox="0 0 14 20"><path d="M1 1 V16 L4.5 12.5 L7 18 L9.5 17 L7 11.5 H12 Z" fill="#fff" stroke="#111" stroke-width="1.2" stroke-linejoin="round"/></svg>
</body></html>
